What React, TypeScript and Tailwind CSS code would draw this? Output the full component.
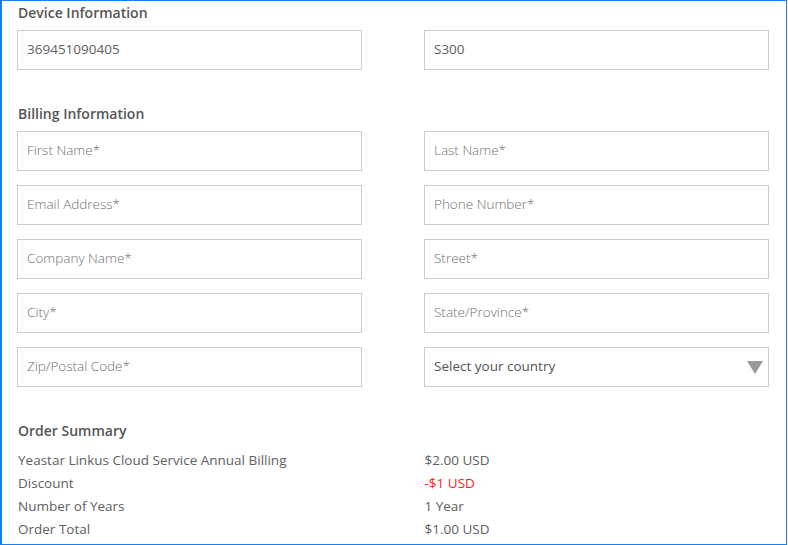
import React from "react";

const font = { fontFamily: '"Open Sans", "Noto Sans", sans-serif' };

function Field({ value, placeholder }: { value?: string; placeholder?: string }) {
  return (
    <div className="h-[40px] border border-[#cccccc] bg-white flex items-center px-[9px] pb-px">
      {value ? (
        <span className="text-[13.5px] text-[#606060]">{value}</span>
      ) : (
        <span className="text-[13.5px] text-[#707070] font-light">{placeholder}</span>
      )}
    </div>
  );
}

function Heading({ children, className = "" }: { children: React.ReactNode; className?: string }) {
  return (
    <div className={`pl-px text-[14px] leading-[20px] font-semibold text-[#555555] ${className}`}>
      {children}
    </div>
  );
}

export default function App() {
  const rows: [string, string, boolean?][] = [
    ["Yeastar Linkus Cloud Service Annual Billing", "$2.00 USD"],
    ["Discount", "-$1 USD", true],
    ["Number of Years", "1 Year"],
    ["Order Total", "$1.00 USD"],
  ];
  return (
    <div
      style={font}
      className="w-[787px] h-[545px] bg-white border-[#1a7fe8] border-t border-b border-r border-l-2 pl-[15px] pr-[17px] pt-[2px]"
    >
      <Heading>Device Information</Heading>
      <div className="grid grid-cols-2 gap-x-[62px] mt-[7px]">
        <Field value="369451090405" />
        <Field value="S300" />
      </div>

      <Heading className="mt-[34px]">Billing Information</Heading>
      <div className="grid grid-cols-2 gap-x-[62px] gap-y-[14px] mt-[7px]">
        <Field placeholder="First Name*" />
        <Field placeholder="Last Name*" />
        <Field placeholder="Email Address*" />
        <Field placeholder="Phone Number*" />
        <Field placeholder="Company Name*" />
        <Field placeholder="Street*" />
        <Field placeholder="City*" />
        <Field placeholder="State/Province*" />
        <Field placeholder="Zip/Postal Code*" />
        <div className="h-[40px] border border-[#cccccc] bg-white flex items-center justify-between pl-[9px] pr-[5px] pb-px">
          <span className="text-[13.5px] text-[#555555]">Select your country</span>
          <svg width="16" height="13" viewBox="0 0 16 13" className="mt-px">
            <polygon points="0,0 16,0 8,13" fill="#999999" />
          </svg>
        </div>
      </div>

      <Heading className="mt-[34px]">Order Summary</Heading>
      <div className="mt-[8px] grid grid-cols-2 gap-x-[62px] pl-px">
        {rows.map(([l, r, red]) => (
          <React.Fragment key={l}>
            <div className="text-[13.5px] leading-[23px] text-[#606060]">{l}</div>
            <div className={`text-[13.5px] leading-[23px] ${red ? "text-[#ff1a1a]" : "text-[#606060]"}`}>{r}</div>
          </React.Fragment>
        ))}
      </div>
    </div>
  );
}
